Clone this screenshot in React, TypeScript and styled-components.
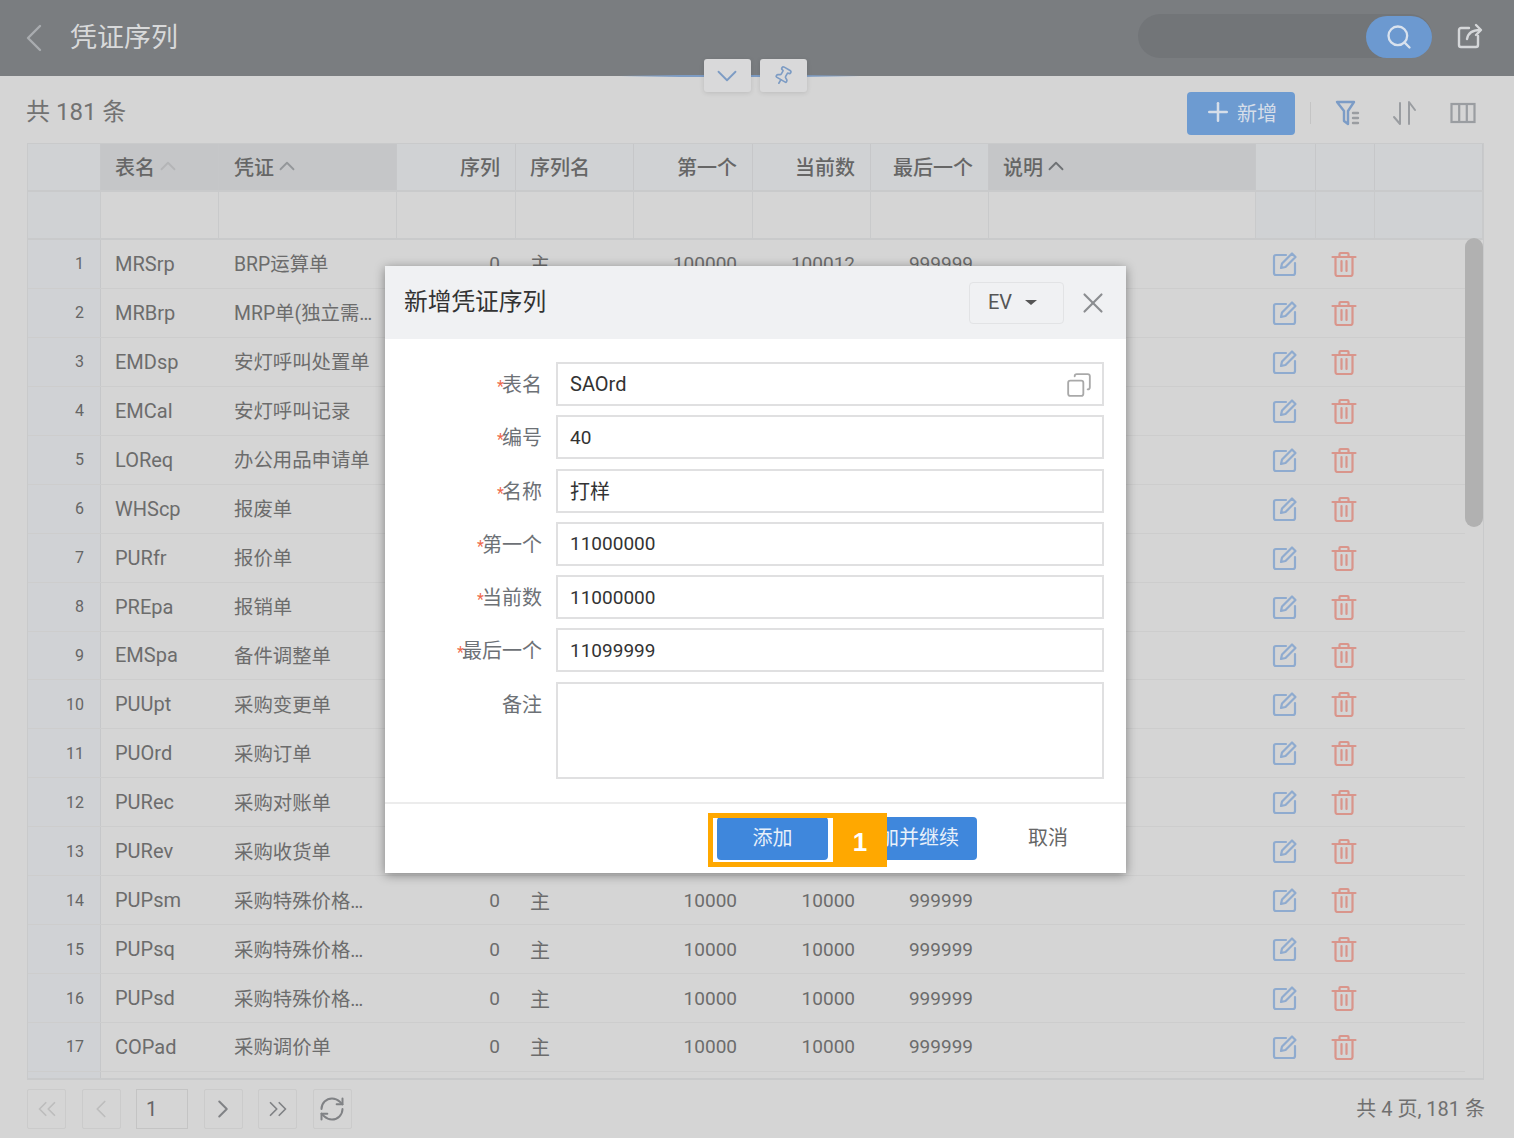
import styled, { createGlobalStyle } from "styled-components";
import { ChevronDown, ChevronLeft, ChevronRight, ChevronUp, ChevronsLeft, ChevronsRight, Copy, Pin, Plus, RefreshCw, Search, X } from "lucide-react";

const FONT = `Roboto, "Noto Sans CJK SC", sans-serif`;
const COLUMNS = "73px 118px 178px 119px 118px 119px 118px 118px 267px 60px 59px 1fr";

const GlobalStyle = createGlobalStyle`
	html, body {
		margin: 0;
		padding: 0;
		background: #d5d5d5;
	}
	* {
		box-sizing: border-box;
	}
`;

const Page = styled.div`
	position: relative;
	display: flex;
	flex-direction: column;
	width: 1514px;
	height: 1138px;
	overflow: hidden;
	background: #d5d5d5;
	font-family: ${FONT};
	font-size: 20px;
	color: #6c6c6c;
`;

const TopBar = styled.header`
	position: relative;
	display: flex;
	flex: 0 0 76px;
	align-items: center;
	padding: 0 31px 0 10px;
	background: #7a7d80;
	color: #d5d7d9;
`;

const PageTitle = styled.h1`
	margin: -5px 0 0 12px;
	font-size: 27px;
	font-weight: 400;
	color: #d8d9da;
`;

const SearchPill = styled.div`
	display: flex;
	justify-content: flex-end;
	width: 294px;
	height: 44px;
	margin: -4px 0 0 auto;
	border-radius: 22px;
	background: #727578;
`;

const SearchButton = styled.div`
	display: flex;
	align-items: center;
	justify-content: center;
	width: 66px;
	height: 42px;
	margin-top: 2px;
	border-radius: 21px;
	background: #6c99d0;
	color: #d9e2ee;
`;

const ShareSlot = styled.div`
	display: flex;
	margin: -4px 0 0 25px;
	color: #d5d7d9;
`;

const CollapseTabs = styled.div`
	position: absolute;
	top: 59px;
	left: 635px;
	display: flex;
	justify-content: center;
	gap: 9px;
	width: 240px;
	height: 33px;
`;

const CollapseLine = styled.div`
	position: absolute;
	top: 16px;
	left: -15px;
	width: 100%;
	height: 2px;
	background: linear-gradient(90deg, transparent, #7d9cc4 25%, #7d9cc4 75%, transparent);
`;

const CollapseTab = styled.div`
	position: relative;
	display: flex;
	align-items: center;
	justify-content: center;
	width: 47px;
	height: 33px;
	border-radius: 3px;
	background: #d9d9da;
	box-shadow: 0 1px 5px rgba(0, 0, 0, 0.12);
	color: #7d9cc4;
`;

const Toolbar = styled.div`
	display: flex;
	flex: 0 0 67px;
	align-items: center;
	padding: 7px 22px 0 26px;
`;

const TotalText = styled.div`
	margin-top: -8px;
	font-size: 24px;
	color: #727272;
`;

const AddButton = styled.div`
	display: flex;
	align-items: center;
	justify-content: center;
	gap: 4px;
	width: 108px;
	height: 43px;
	margin-left: auto;
	padding: 0 2px 2px 0;
	border-radius: 4px;
	background: #6d9bd1;
	color: #d6dee9;
`;

const ToolDivider = styled.div`
	width: 1px;
	height: 22px;
	margin: 0 7px 0 15px;
	background: #c4c4c4;
`;

const ToolSlot = styled.div<{ $nudge?: number }>`
	display: flex;
	align-items: center;
	justify-content: center;
	width: 58px;
	padding-left: ${props => props.$nudge || 0}px;
	color: #9a9da1;
`;

const TableFrame = styled.div`
	position: relative;
	flex: 0 0 937px;
	margin: 0 30px 0 27px;
	overflow: hidden;
	border: 1px solid #c9cacb;
	border-bottom-width: 2px;
`;

const HeadRow = styled.div`
	display: grid;
	grid-template-columns: ${COLUMNS};
	height: 48px;
	border-bottom: 2px solid #c9cacb;
`;

const FilterRow = styled.div`
	display: grid;
	grid-template-columns: ${COLUMNS};
	height: 48px;
	border-bottom: 2px solid #c9cacb;
`;

const HeadCell = styled.div<{ $sorted?: boolean; $right?: boolean; $inset?: number }>`
	display: flex;
	align-items: center;
	justify-content: ${props => (props.$right ? "flex-end" : "flex-start")};
	padding: 0 15px 2px ${props => props.$inset || 14}px;
	border-right: 1px solid #c6c7c9;
	background: ${props => (props.$sorted ? "#c5c6c8" : "#d0d2d4")};
	font-weight: 500;
	color: #666;
`;

const FilterCell = styled.div<{ $tinted?: boolean }>`
	border-right: 1px solid #c9cacb;
	background: ${props => (props.$tinted ? "#d0d2d4" : "#d5d5d5")};
`;

const DataRow = styled.div`
	display: grid;
	grid-template-columns: ${COLUMNS};
	height: 48.94px;
	margin-right: 18px;
	border-bottom: 1.5px solid #cdcdcd;
`;

const NumCell = styled.div`
	display: flex;
	align-items: center;
	justify-content: flex-end;
	padding-right: 16px;
	border-right: 1px solid #c6c7c9;
	background: #d0d2d5;
	font-size: 16px;
	color: #666;
`;

const TextCell = styled.div`
	display: flex;
	align-items: center;
	min-width: 0;
	padding: 0 15px 0 14px;
	white-space: nowrap;
	overflow: hidden;
`;

const NameCell = styled(TextCell)`
	padding: 0 15px 2px;
	font-size: 19.4px;
`;

const NumberCell = styled(TextCell)`
	justify-content: flex-end;
	padding-right: 16px;
	font-size: 19px;
`;

const IconCell = styled.div`
	display: flex;
	align-items: center;
	justify-content: center;
	padding-right: 3px;
`;

const ScrollThumb = styled.div`
	position: absolute;
	top: 94px;
	right: 0;
	width: 18px;
	height: 289px;
	border-radius: 9px;
	background: #b1b1b1;
`;

const Pager = styled.div`
	display: flex;
	flex: 1;
	align-items: center;
	gap: 15.5px;
	padding: 0 29px 0 27px;
`;

const PagerButton = styled.div<{ $muted?: boolean }>`
	display: flex;
	align-items: center;
	justify-content: center;
	width: 39px;
	height: 40px;
	border: 1.5px solid #cbcbcb;
	border-radius: 2px;
	color: ${props => (props.$muted ? "#bdbdbd" : "#808285")};
`;

const PageInput = styled.div`
	display: flex;
	align-items: center;
	width: 52px;
	height: 40px;
	padding-left: 9px;
	border: 1.5px solid #c4c4c4;
	color: #666;
`;

const PagerTotal = styled.div`
	margin: -4px 0 0 auto;
	color: #707070;
`;

const Dialog = styled.div`
	position: absolute;
	top: 266px;
	left: 385px;
	display: flex;
	flex-direction: column;
	width: 741px;
	height: 607px;
	background: #fff;
	box-shadow: 0 2px 10px rgba(0, 0, 0, 0.4);
`;

const DialogHead = styled.div`
	display: flex;
	flex: 0 0 73px;
	align-items: center;
	padding: 0 16px 0 19px;
	background: #f0f1f3;
`;

const DialogTitle = styled.div`
	margin-top: -5px;
	font-size: 23.7px;
	color: #333;
`;

const LangSelect = styled.div`
	display: flex;
	align-items: center;
	gap: 13px;
	width: 95px;
	height: 42px;
	margin-left: auto;
	padding: 0 0 1px 18px;
	border: 1.5px solid #e2e3e5;
	border-radius: 4px;
	color: #555;
`;

const Caret = styled.div`
	width: 0;
	height: 0;
	border-top: 5px solid #555;
	border-left: 6px solid transparent;
	border-right: 6px solid transparent;
`;

const CloseSlot = styled.div`
	display: flex;
	margin-left: 12px;
	color: #8b8d90;
`;

const FormBody = styled.div`
	display: flex;
	flex: 1;
	flex-direction: column;
	gap: 9.3px;
	padding: 23px 22px 0 0;
`;

const FormRow = styled.div`
	display: grid;
	grid-template-columns: 157px 1fr;
	column-gap: 14px;
`;

const FormLabel = styled.div`
	padding-top: 7px;
	text-align: right;
	color: #6d7176;
`;

const Required = styled.span`
	margin-right: -2px;
	font-size: 16px;
	color: #ef6c4d;
`;

const Field = styled.div<{ $tall?: boolean; $numeric?: boolean }>`
	position: relative;
	display: flex;
	align-items: center;
	height: ${props => (props.$tall ? "97px" : "44px")};
	padding: 0 12px;
	border: 2px solid #e0e0e1;
	font-size: ${props => (props.$numeric ? "19px" : "20px")};
	color: #333;
`;

const CopyIcon = styled.div`
	position: absolute;
	top: 8px;
	right: 10px;
	display: flex;
	color: #a9a9a9;
`;

const DialogFoot = styled.div`
	position: relative;
	display: flex;
	flex: 0 0 71px;
	align-items: center;
	padding-right: 29px;
	padding-left: 332px;
	border-top: 2px solid #ececec;
`;

const PrimaryButton = styled.div<{ $width: number }>`
	display: flex;
	align-items: center;
	justify-content: center;
	width: ${props => props.$width}px;
	height: 43px;
	margin-right: 13px;
	padding-bottom: 4px;
	border-radius: 4px;
	background: #3f87dc;
	color: #e8f0fa;
`;

const CancelButton = styled.div`
	margin: -4px 0 0 38px;
	color: #666;
`;

const StepMarker = styled.div`
	position: absolute;
	top: 9px;
	left: 323px;
	width: 179px;
	height: 54px;
	border: 5px solid #ffa800;
`;

const StepNumber = styled.div`
	position: absolute;
	top: -5px;
	right: -5px;
	display: flex;
	align-items: center;
	justify-content: center;
	width: 54px;
	height: 54px;
	padding-top: 5px;
	background: #ffa800;
	font-family: "Liberation Sans", sans-serif;
	font-size: 26px;
	font-weight: 700;
	color: #fff;
`;

const EditIcon = () => (
	<svg width="26" height="26" viewBox="0 0 26 26" fill="none" stroke="#8fabcf" strokeWidth="2.2" strokeLinejoin="round" strokeLinecap="round">
		<path d="M14 4H4a2 2 0 0 0-2 2v16a2 2 0 0 0 2 2h17a2 2 0 0 0 2-2V12" />
		<path d="M20 2.5l3.5 3.5-10 10-4.5 1 1-4.5z" />
	</svg>
);

const TrashIcon = () => (
	<svg width="26" height="26" viewBox="0 0 26 26" fill="none" stroke="#d9958b" strokeWidth="2.2" strokeLinejoin="round" strokeLinecap="round">
		<path d="M1.5 6h23" />
		<path d="M8.5 6V3a1 1 0 0 1 1-1h7a1 1 0 0 1 1 1v3" />
		<path d="M4.5 6v17a2 2 0 0 0 2 2h13a2 2 0 0 0 2-2V6" />
		<path d="M10.5 10v10M15.5 10v10" />
	</svg>
);

const ShareIcon = () => (
	<svg width="26" height="26" viewBox="0 0 26 26" fill="none" stroke="currentColor" strokeWidth="2.4" strokeLinejoin="round" strokeLinecap="round">
		<path d="M12 5H4a2 2 0 0 0-2 2v15a2 2 0 0 0 2 2h15a2 2 0 0 0 2-2v-9" />
		<path d="M10 16c1-6 5-9 13-9" />
		<path d="M19 2l5 5-5 5" />
	</svg>
);

const FilterIcon = () => (
	<svg width="28" height="28" viewBox="0 0 28 28" fill="none" stroke="#7c9cc6" strokeWidth="2.4" strokeLinejoin="round" strokeLinecap="round">
		<path d="M2 3h17l-6 9v13l-4-3V12z" />
		<path d="M18 14h5M18 19h5M18 24h5" stroke="#9a9da1" />
	</svg>
);

const SortIcon = () => (
	<svg width="28" height="28" viewBox="0 0 28 28" fill="none" stroke="currentColor" strokeWidth="2" strokeLinejoin="round" strokeLinecap="round">
		<path d="M9 4v21L3 18" />
		<path d="M18 25V3l6 8" />
	</svg>
);

const ColumnsIcon = () => (
	<svg width="26" height="22" viewBox="0 0 26 22" fill="none" stroke="currentColor" strokeWidth="2.2">
		<rect x="1.5" y="2" width="23" height="18" />
		<path d="M9.2 2v18M16.8 2v18" />
	</svg>
);

type RowData = { code: string; name: string; first?: string; current?: string; last?: string };

const rows: RowData[] = [
	{ code: "MRSrp", name: "BRP运算单", first: "100000", current: "100012", last: "999999" },
	{ code: "MRBrp", name: "MRP单(独立需…" },
	{ code: "EMDsp", name: "安灯呼叫处置单" },
	{ code: "EMCal", name: "安灯呼叫记录" },
	{ code: "LOReq", name: "办公用品申请单" },
	{ code: "WHScp", name: "报废单" },
	{ code: "PURfr", name: "报价单" },
	{ code: "PREpa", name: "报销单" },
	{ code: "EMSpa", name: "备件调整单" },
	{ code: "PUUpt", name: "采购变更单" },
	{ code: "PUOrd", name: "采购订单" },
	{ code: "PURec", name: "采购对账单" },
	{ code: "PURev", name: "采购收货单" },
	{ code: "PUPsm", name: "采购特殊价格…", first: "10000", current: "10000", last: "999999" },
	{ code: "PUPsq", name: "采购特殊价格…", first: "10000", current: "10000", last: "999999" },
	{ code: "PUPsd", name: "采购特殊价格…", first: "10000", current: "10000", last: "999999" },
	{ code: "COPad", name: "采购调价单", first: "10000", current: "10000", last: "999999" },
];

const fields = [
	{ label: "表名", value: "SAOrd", copy: true },
	{ label: "编号", value: "40", numeric: true },
	{ label: "名称", value: "打样" },
	{ label: "第一个", value: "11000000", numeric: true },
	{ label: "当前数", value: "11000000", numeric: true },
	{ label: "最后一个", value: "11099999", numeric: true },
];

const SortArrow = (props: { color: string }) => <ChevronUp size={26} strokeWidth={1.7} color={props.color} />;

const App = () => {
	return (
		<Page>
			<GlobalStyle />
			<TopBar>
				<ChevronLeft size={48} strokeWidth={1.2} color="#a9acaf" />
				<PageTitle>凭证序列</PageTitle>
				<SearchPill>
					<SearchButton>
						<Search size={28} strokeWidth={2} />
					</SearchButton>
				</SearchPill>
				<ShareSlot>
					<ShareIcon />
				</ShareSlot>
				<CollapseTabs>
					<CollapseLine />
					<CollapseTab>
						<ChevronDown size={34} strokeWidth={1.3} />
					</CollapseTab>
					<CollapseTab>
						<Pin size={20} strokeWidth={2} style={{ transform: "rotate(30deg)" }} />
					</CollapseTab>
				</CollapseTabs>
			</TopBar>

			<Toolbar>
				<TotalText>共 181 条</TotalText>
				<AddButton>
					<Plus size={30} strokeWidth={2} />
					新增
				</AddButton>
				<ToolDivider />
				<ToolSlot $nudge={3}>
					<FilterIcon />
				</ToolSlot>
				<ToolSlot>
					<SortIcon />
				</ToolSlot>
				<ToolSlot>
					<ColumnsIcon />
				</ToolSlot>
			</Toolbar>

			<TableFrame>
				<HeadRow>
					<HeadCell />
					<HeadCell $sorted>表名<SortArrow color="#b4b5b7" /></HeadCell>
					<HeadCell $sorted $inset={15}>凭证<SortArrow color="#94979a" /></HeadCell>
					<HeadCell $right>序列</HeadCell>
					<HeadCell>序列名</HeadCell>
					<HeadCell $right>第一个</HeadCell>
					<HeadCell $right>当前数</HeadCell>
					<HeadCell $right>最后一个</HeadCell>
					<HeadCell $sorted>说明<SortArrow color="#6f7275" /></HeadCell>
					<HeadCell />
					<HeadCell />
					<HeadCell />
				</HeadRow>
				<FilterRow>
					{COLUMNS.split(" ").map((_, i) => (
						<FilterCell key={i} $tinted={i === 0 || i > 8} />
					))}
				</FilterRow>
				{rows.map((row, i) => (
					<DataRow key={row.code}>
						<NumCell>{i + 1}</NumCell>
						<TextCell>{row.code}</TextCell>
						<NameCell>{row.name}</NameCell>
						<NumberCell>{row.first && "0"}</NumberCell>
						<TextCell>{row.first && "主"}</TextCell>
						<NumberCell>{row.first}</NumberCell>
						<NumberCell>{row.current}</NumberCell>
						<NumberCell>{row.last}</NumberCell>
						<TextCell />
						<IconCell>
							<EditIcon />
						</IconCell>
						<IconCell>
							<TrashIcon />
						</IconCell>
						<TextCell />
					</DataRow>
				))}
				<DataRow>
					<NumCell />
				</DataRow>
				<ScrollThumb />
			</TableFrame>

			<Pager>
				<PagerButton $muted>
					<ChevronsLeft size={30} strokeWidth={1.4} />
				</PagerButton>
				<PagerButton $muted>
					<ChevronLeft size={30} strokeWidth={1.4} />
				</PagerButton>
				<PageInput>1</PageInput>
				<PagerButton>
					<ChevronRight size={30} strokeWidth={1.6} />
				</PagerButton>
				<PagerButton>
					<ChevronsRight size={30} strokeWidth={1.4} />
				</PagerButton>
				<PagerButton>
					<RefreshCw size={28} strokeWidth={1.7} />
				</PagerButton>
				<PagerTotal>共 4 页, 181 条</PagerTotal>
			</Pager>

			<Dialog>
				<DialogHead>
					<DialogTitle>新增凭证序列</DialogTitle>
					<LangSelect>
						EV
						<Caret />
					</LangSelect>
					<CloseSlot>
						<X size={34} strokeWidth={1.5} />
					</CloseSlot>
				</DialogHead>
				<FormBody>
					{fields.map(field => (
						<FormRow key={field.label}>
							<FormLabel>
								<Required>*</Required>
								{field.label}
							</FormLabel>
							<Field $numeric={field.numeric}>
								{field.value}
								{field.copy && (
									<CopyIcon>
										<Copy size={26} strokeWidth={1.7} style={{ transform: "scaleX(-1)" }} />
									</CopyIcon>
								)}
							</Field>
						</FormRow>
					))}
					<FormRow>
						<FormLabel>备注</FormLabel>
						<Field $tall />
					</FormRow>
				</FormBody>
				<DialogFoot>
					<PrimaryButton $width={111}>添加</PrimaryButton>
					<PrimaryButton $width={136}>添加并继续</PrimaryButton>
					<CancelButton>取消</CancelButton>
					<StepMarker>
						<StepNumber>1</StepNumber>
					</StepMarker>
				</DialogFoot>
			</Dialog>
		</Page>
	);
};

export default App;
